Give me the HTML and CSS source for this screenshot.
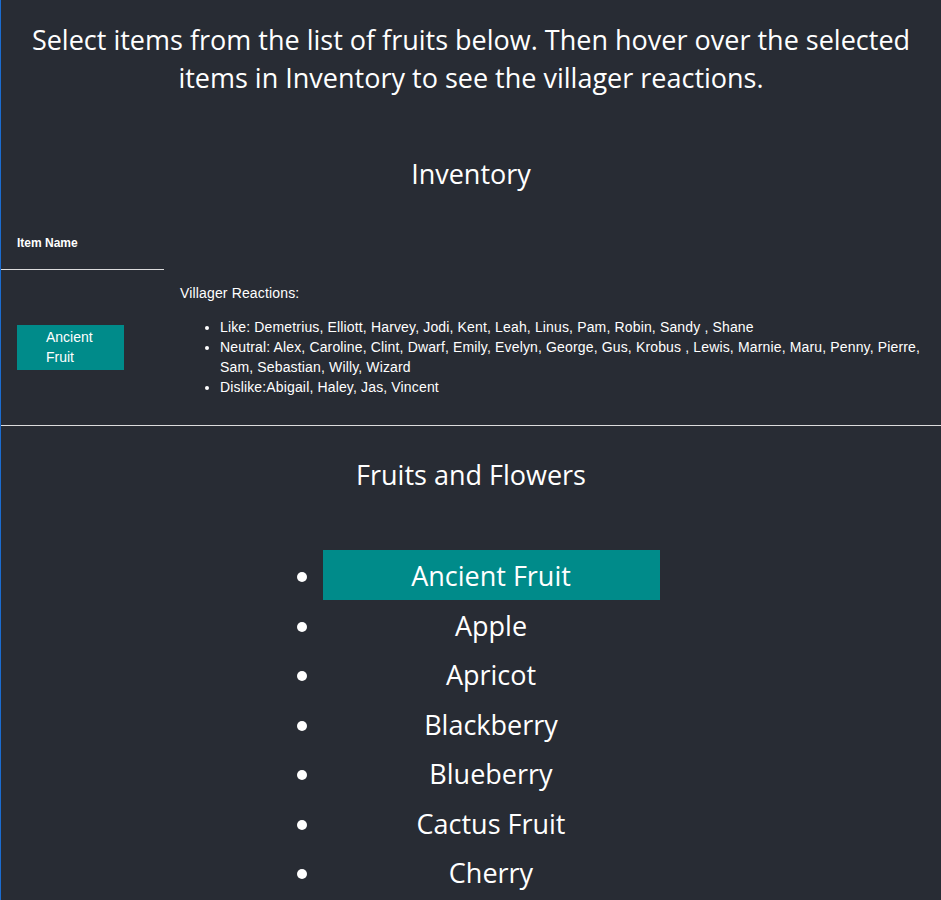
FILE: index.html
```html
<!DOCTYPE html>
<html lang="en">
<head>
<meta charset="utf-8">
<title>Stardew Gifts</title>
<link rel="stylesheet" href="styles.css">
</head>
<body>
<div class="app">
  <p class="intro">Select items from the list of fruits below. Then hover over the selected items in Inventory to see the villager reactions.</p>
  <h2 class="title title-inventory">Inventory</h2>
  <div class="inventory">
    <div class="inv-head">Item Name</div>
    <div class="inv-head-spacer"></div>
    <div class="item-cell"><button class="item-btn">Ancient Fruit</button></div>
    <div class="reactions">
      <p class="reactions-title">Villager Reactions:</p>
      <ul class="reactions-list">
        <li>Like: Demetrius, Elliott, Harvey, Jodi, Kent, Leah, Linus, Pam, Robin, Sandy , Shane</li>
        <li>Neutral: Alex, Caroline, Clint, Dwarf, Emily, Evelyn, George, Gus, Krobus , Lewis, Marnie, Maru, Penny, Pierre, Sam, Sebastian, Willy, Wizard</li>
        <li>Dislike:Abigail, Haley, Jas, Vincent</li>
      </ul>
    </div>
  </div>
  <hr class="divider">
  <h2 class="title title-fruits">Fruits and Flowers</h2>
  <ul class="fruits">
    <li class="fruit selected">Ancient Fruit</li>
    <li class="fruit">Apple</li>
    <li class="fruit">Apricot</li>
    <li class="fruit">Blackberry</li>
    <li class="fruit">Blueberry</li>
    <li class="fruit">Cactus Fruit</li>
    <li class="fruit">Cherry</li>
  </ul>
</div>
</body>
</html>
```

FILE: styles.css
```css
html, body {
  margin: 0;
  padding: 0;
  background: #282c34;
}

.app {
  min-height: 900px;
  background: #282c34;
  color: #ffffff;
  border-left: 1px solid #1b6ccf;
  font-family: "Segoe UI", "Open Sans", "Noto Sans", sans-serif;
  font-size: 27px;
  text-align: center;
  overflow: hidden;
}

.intro {
  margin: 21px 0 0;
  line-height: 38px;
  padding: 0 20px;
}

.title {
  font-weight: normal;
  font-size: 27px;
  line-height: 38px;
  margin: 0;
}

.title-inventory {
  margin-top: 58px;
}

.inventory {
  display: grid;
  grid-template-columns: 163px 1fr;
  text-align: left;
  font-family: "Liberation Sans", Arial, sans-serif;
}

.inv-head {
  font-size: 12px;
  font-weight: bold;
  line-height: 14px;
  padding: 43px 0 19px 16px;
  border-bottom: 1px solid #dcdcdc;
}

.item-cell {
  display: flex;
  align-items: center;
  padding-left: 16px;
}

.item-btn {
  width: 107px;
  box-sizing: border-box;
  background: #008b8a;
  color: #ffffff;
  border: none;
  font-family: "Liberation Sans", Arial, sans-serif;
  font-size: 14px;
  line-height: 20px;
  text-align: left;
  padding: 2px 0 3px 29px;
}

.reactions {
  padding: 0 16px 14px 16px;
  font-size: 14px;
  line-height: 20px;
  letter-spacing: 0.15px;
}

.reactions-title {
  margin: 13px 0 14px;
}

.reactions-list {
  margin: 0 0 14px;
  padding-left: 40px;
}

.divider {
  margin: 0;
  border: none;
  border-top: 1px solid #dcdcdc;
  height: 0;
}

.title-fruits {
  margin-top: 30px;
}

.fruits {
  width: 337px;
  margin: 56px auto 0;
  padding: 0 0 0 40px;
  text-align: center;
}

.fruit {
  line-height: 37.5px;
  padding: 7px 0 5px;
}

.fruit.selected {
  background: #008b8a;
}
```
